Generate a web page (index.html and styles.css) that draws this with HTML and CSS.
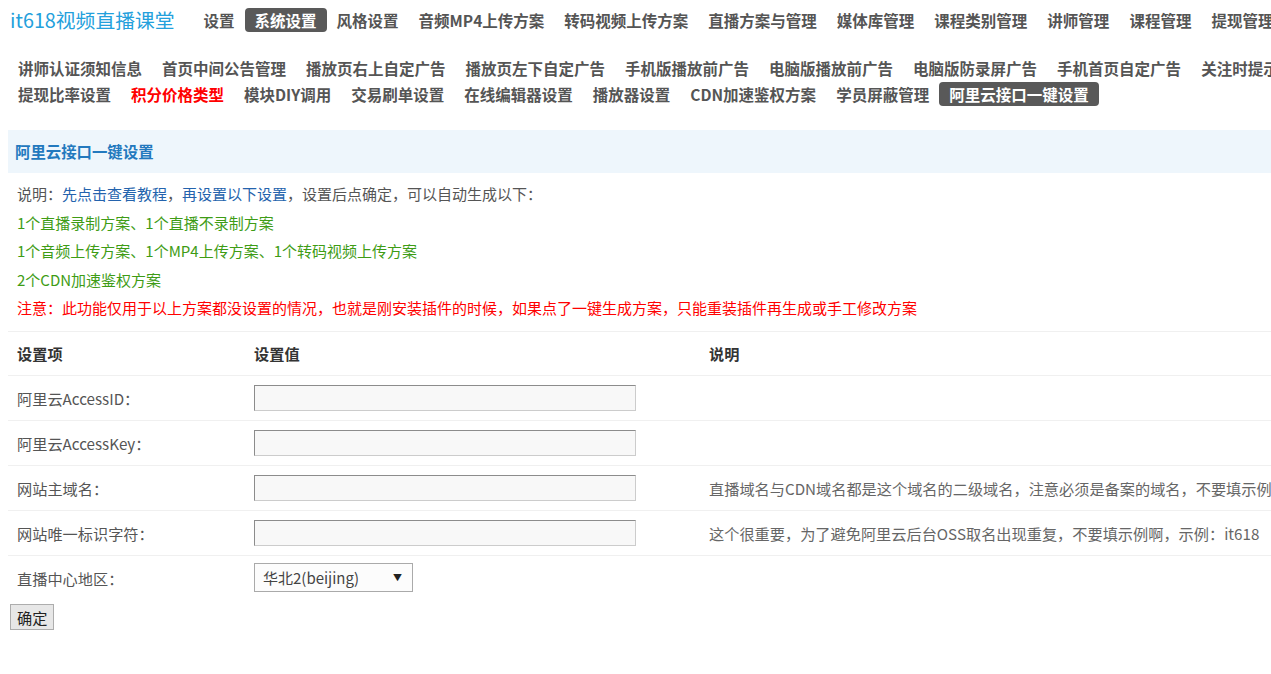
FILE: index.html
```html
<!DOCTYPE html>
<html lang="zh-CN">
<head>
    <meta charset="UTF-8">
    <meta name="viewport" content="width=device-width, initial-scale=1.0">
    <title>阿里云接口一键设置 - it618视频直播课堂</title>
    <link rel="stylesheet" href="styles.css">
</head>
<body>
    <div class="page">
        <div class="topbar">
            <a class="logo" href="#">it618视频直播课堂</a>
            <ul class="mainnav">
                <li><a href="#">设置</a></li>
                <li class="on"><a href="#">系统设置</a></li>
                <li><a href="#">风格设置</a></li>
                <li><a href="#">音频MP4上传方案</a></li>
                <li><a href="#">转码视频上传方案</a></li>
                <li><a href="#">直播方案与管理</a></li>
                <li><a href="#">媒体库管理</a></li>
                <li><a href="#">课程类别管理</a></li>
                <li><a href="#">讲师管理</a></li>
                <li><a href="#">课程管理</a></li>
                <li><a href="#">提现管理</a></li>
                <li><a href="#">订单管理</a></li>
            </ul>
        </div>

        <div class="subnav">
            <ul class="subrow">
                <li><a href="#">讲师认证须知信息</a></li>
                <li><a href="#">首页中间公告管理</a></li>
                <li><a href="#">播放页右上自定广告</a></li>
                <li><a href="#">播放页左下自定广告</a></li>
                <li><a href="#">手机版播放前广告</a></li>
                <li><a href="#">电脑版播放前广告</a></li>
                <li><a href="#">电脑版防录屏广告</a></li>
                <li><a href="#">手机首页自定广告</a></li>
                <li><a href="#">关注时提示信息</a></li>
            </ul>
            <ul class="subrow">
                <li><a href="#">提现比率设置</a></li>
                <li class="hot"><a href="#">积分价格类型</a></li>
                <li><a href="#">模块DIY调用</a></li>
                <li><a href="#">交易刷单设置</a></li>
                <li><a href="#">在线编辑器设置</a></li>
                <li><a href="#">播放器设置</a></li>
                <li><a href="#">CDN加速鉴权方案</a></li>
                <li><a href="#">学员屏蔽管理</a></li>
                <li class="on"><a href="#">阿里云接口一键设置</a></li>
            </ul>
        </div>

        <div class="panel">
            <div class="panel-hd">阿里云接口一键设置</div>
            <div class="tips">
                <p>说明：<a href="#">先点击查看教程</a>，<a href="#">再设置以下设置</a>，设置后点确定，可以自动生成以下：</p>
                <p class="green">1个直播录制方案、1个直播不录制方案</p>
                <p class="green">1个音频上传方案、1个MP4上传方案、1个转码视频上传方案</p>
                <p class="green">2个CDN加速鉴权方案</p>
                <p class="red">注意：此功能仅用于以上方案都没设置的情况，也就是刚安装插件的时候，如果点了一键生成方案，只能重装插件再生成或手工修改方案</p>
            </div>

            <form class="setform" onsubmit="return false;">
                <table class="settings">
                    <tr class="head">
                        <th class="c1">设置项</th>
                        <th class="c2">设置值</th>
                        <th>说明</th>
                    </tr>
                    <tr>
                        <td>阿里云AccessID：</td>
                        <td><input type="text" class="txt" name="accessid"></td>
                        <td></td>
                    </tr>
                    <tr>
                        <td>阿里云AccessKey：</td>
                        <td><input type="text" class="txt" name="accesskey"></td>
                        <td></td>
                    </tr>
                    <tr>
                        <td>网站主域名：</td>
                        <td><input type="text" class="txt" name="domain"></td>
                        <td class="desc">直播域名与CDN域名都是这个域名的二级域名，注意必须是备案的域名，不要填示例啊，示例：it618.com</td>
                    </tr>
                    <tr>
                        <td>网站唯一标识字符：</td>
                        <td><input type="text" class="txt" name="siteflag"></td>
                        <td class="desc">这个很重要，为了避免阿里云后台OSS取名出现重复，不要填示例啊，示例：it618</td>
                    </tr>
                    <tr class="last">
                        <td>直播中心地区：</td>
                        <td>
                            <span class="sel">
                                <select name="region">
                                    <option>华北2(beijing)</option>
                                    <option>华东1(hangzhou)</option>
                                    <option>华东2(shanghai)</option>
                                    <option>华南1(shenzhen)</option>
                                </select>
                            </span>
                        </td>
                        <td></td>
                    </tr>
                </table>
                <button type="submit" class="btn">确定</button>
            </form>
        </div>
    </div>
</body>
</html>
```

FILE: styles.css
```css
html, body {
    overflow: hidden;
}
body {
    margin: 0;
    font-family: "Noto Sans CJK SC", "Microsoft YaHei", sans-serif;
    font-size: 15.2px;
    color: #555;
    background: #fff;
}
a {
    text-decoration: none;
}
ul {
    list-style: none;
    margin: 0;
    padding: 0;
}
.page {
    width: 1520px;
    padding: 0 8px;
}

/* 顶部导航 */
.topbar {
    display: flex;
    align-items: center;
    height: 40px;
}
.logo {
    font-size: 19.8px;
    line-height: 26px;
    color: #23a0dc;
    margin-left: 2px;
    margin-right: 19px;
    white-space: nowrap;
}
.mainnav, .subrow {
    display: flex;
    white-space: nowrap;
}
.mainnav li a, .subrow li a {
    display: block;
    padding: 0 10px;
    height: 24px;
    line-height: 24px;
    font-size: 15.5px;
    font-weight: bold;
    color: #555;
    border-radius: 4px;
}
.mainnav li.on a, .subrow li.on a {
    background: #595959;
    color: #fff;
}
.subnav {
    margin-top: 15px;
}
.subrow {
    height: 26px;
    align-items: center;
}
.subrow li.hot a {
    color: #f00;
}

/* 设置面板 */
.panel {
    margin-top: 23px;
}
.panel-hd {
    height: 43px;
    line-height: 43px;
    padding-left: 7px;
    background: #eef6fc;
    color: #2379be;
    font-size: 15.4px;
    font-weight: bold;
}
.tips {
    padding: 7px 0 0 9px;
}
.tips p {
    margin: 0;
    height: 28.6px;
    line-height: 28.6px;
    font-size: 15px;
    white-space: nowrap;
}
.tips a {
    color: #2463ad;
}
.tips .green {
    color: #3e9c15;
}
.tips .red {
    color: #f00;
}

.settings {
    margin-top: 8px;
    width: 100%;
    border-collapse: collapse;
}
.settings th, .settings td {
    height: 44px;
    padding: 0 9px;
    border-top: 1px solid #f0f0f0;
    text-align: left;
    white-space: nowrap;
    vertical-align: middle;
}
.settings th {
    color: #333;
    font-weight: bold;
    height: 43px;
}
.settings .c1 {
    width: 219px;
}
.settings .c2 {
    width: 437px;
}
.settings td.desc {
    color: #666;
}
.txt {
    display: block;
    box-sizing: border-box;
    width: 382px;
    height: 26px;
    margin: 0;
    padding: 0 4px;
    border: 1px solid #ccc;
    border-top-color: #8c8c8c;
    border-left-color: #8c8c8c;
    background: #f8f8f8;
    font: inherit;
}
.sel {
    position: relative;
    display: inline-block;
    vertical-align: middle;
}
.sel select {
    display: block;
    box-sizing: border-box;
    width: 159px;
    height: 29px;
    padding: 0 24px 0 8px;
    border: 1px solid #aaa;
    background: #fcfcfc;
    color: #444;
    font: inherit;
    font-size: 15px;
    appearance: none;
    -webkit-appearance: none;
}
.sel::after {
    content: "▼";
    position: absolute;
    right: 11px;
    top: 9px;
    font-size: 9px;
    line-height: 11px;
    color: #222;
    pointer-events: none;
}
.btn {
    display: block;
    margin: 4px 0 0 2px;
    height: 26px;
    padding: 0 6px;
    border: 1px solid #adadad;
    background: #e7e7e7;
    color: #222;
    font: inherit;
    line-height: 22px;
    cursor: pointer;
}
```
